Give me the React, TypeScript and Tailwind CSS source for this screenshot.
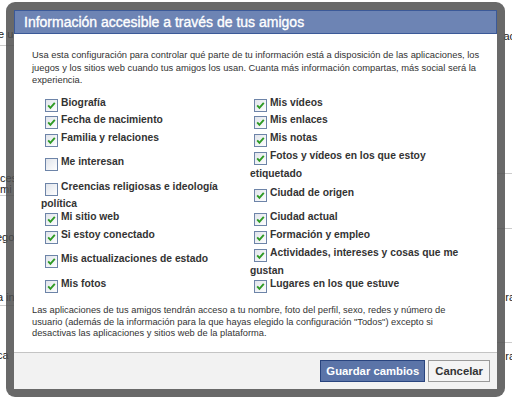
import React from 'react';

type Item = { label: string; more?: string; checked: boolean };

const rows: [Item, Item][] = [
  [{ label: 'Biografía', checked: true }, { label: 'Mis vídeos', checked: true }],
  [{ label: 'Fecha de nacimiento', checked: true }, { label: 'Mis enlaces', checked: true }],
  [{ label: 'Familia y relaciones', checked: true }, { label: 'Mis notas', checked: true }],
  [
    { label: 'Me interesan', checked: false },
    { label: 'Fotos y vídeos en los que estoy', more: 'etiquetado', checked: true },
  ],
  [
    { label: 'Creencias religiosas e ideología', more: 'política', checked: false },
    { label: 'Ciudad de origen', checked: true },
  ],
  [{ label: 'Mi sitio web', checked: true }, { label: 'Ciudad actual', checked: true }],
  [{ label: 'Si estoy conectado', checked: true }, { label: 'Formación y empleo', checked: true }],
  [
    { label: 'Mis actualizaciones de estado', checked: true },
    { label: 'Actividades, intereses y cosas que me', more: 'gustan', checked: true },
  ],
  [{ label: 'Mis fotos', checked: true }, { label: 'Lugares en los que estuve', checked: true }],
];

const CheckBox = ({ checked }: { checked: boolean }) => (
  <svg width="13" height="13" viewBox="0 0 13 13" className="shrink-0">
    <defs>
      <linearGradient id="cbg" x1="0" y1="0" x2="1" y2="1">
        <stop offset="0" stopColor="#dfe3ea" />
        <stop offset="1" stopColor="#ffffff" />
      </linearGradient>
    </defs>
    <rect x="0.5" y="0.5" width="12" height="12" fill="url(#cbg)" stroke="#6d84a8" />
    {checked && (
      <path d="M3.2 6.4 L5.4 8.8 L9.8 3.9" fill="none" stroke="#2e9a24" strokeWidth="1.9" />
    )}
  </svg>
);

const Cell = ({ item }: { item: Item }) => (
  <div className="flex flex-col">
    <div className="flex h-[17.75px] items-start">
      <div className="ml-[4px] mt-[3px]">
        <CheckBox checked={item.checked} />
      </div>
      <span className="ml-[3px] whitespace-nowrap text-[10.3px] font-bold leading-[14px] text-[#333]">
        {item.label}
      </span>
    </div>
    {item.more && (
      <div className="h-[13px] whitespace-nowrap text-[10.3px] font-bold leading-[13px] text-[#333]">
        {item.more}
      </div>
    )}
  </div>
);

const Frag = ({ children, className }: { children: React.ReactNode; className: string }) => (
  <span className={'whitespace-nowrap text-[11px] leading-[11px] text-[#222] ' + className}>{children}</span>
);

const Rule = ({ className }: { className: string }) => <div className={'h-px w-full bg-[#ccc] ' + className} />;

export default function App() {
  return (
    <div className="relative h-[401px] w-[512px] overflow-hidden bg-white font-['Liberation_Sans',Arial,sans-serif] text-[#333]">
      {/* page behind the dialog */}
      <div className="flex h-full justify-between">
        <div className="flex w-[16px] flex-col items-start">
          <Frag className="-ml-[2px] mt-[29px]">e u</Frag>
          <Rule className="mt-[5px]" />
          <Frag className="mt-[127px]">ces</Frag>
          <Frag className="">mi</Frag>
          <Rule className="" />
          <Frag className="-ml-[4px] mt-[36px]">ego</Frag>
          <Frag className="-ml-[3px] mt-[49px]">a in</Frag>
          <Rule className="mt-[2px]" />
          <Frag className="-ml-[3px] mt-[44px]">ca</Frag>
        </div>
        <div className="flex w-[15px] flex-col items-end">
          <Frag className="-mr-[3px] mt-[31px]">ac</Frag>
          <Rule className="mt-[131px]" />
          <Rule className="mt-[54px]" />
          <Frag className="-mr-[3px] mt-[63px]">ra</Frag>
          <Rule className="mt-[39px]" />
          <Frag className="-mr-[3px] mt-[8px]">ra</Frag>
        </div>
      </div>

      {/* dialog */}
      <div className="absolute left-[6px] top-[2px] h-[395px] w-[499px] rounded-[9px] bg-[#4f4f4f]/85 p-[8px]">
        <div className="flex h-full flex-col bg-white">
          <div className="flex h-[24px] items-center border border-[#3b5998] bg-[#6d84b4] pl-[9px]">
            <span className="text-[14px] leading-none text-white [-webkit-text-stroke:0.35px_white]">
              Información accesible a través de tus amigos
            </span>
          </div>

          <div className="flex flex-1 flex-col pl-[18px] pt-[15px]">
            <p className="whitespace-nowrap text-[9.35px] leading-[12.5px]">
              Usa esta configuración para controlar qué parte de tu información está a disposición de las aplicaciones, los
              <br />
              juegos y los sitios web cuando tus amigos los usan. Cuanta más información compartas, más social será la
              <br />
              experiencia.
            </p>

            <div className="ml-[9px] mt-[9px] grid grid-cols-[209px_209px] items-center">
              {rows.map(([a, b], i) => (
                <React.Fragment key={i}>
                  <Cell item={a} />
                  <Cell item={b} />
                </React.Fragment>
              ))}
            </div>

            <p className="mt-[11px] whitespace-nowrap text-[9.3px] leading-[11.5px]">
              Las aplicaciones de tus amigos tendrán acceso a tu nombre, foto del perfil, sexo, redes y número de
              <br />
              usuario (además de la información para la que hayas elegido la configuración "Todos") excepto si
              <br />
              desactivas las aplicaciones y sitios web de la plataforma.
            </p>
          </div>

          <div className="flex h-[37px] items-start justify-end gap-[3px] border-t border-[#c4c4c4] bg-[#f2f2f2] pr-[7px] pt-[7px]">
            <button className="h-[22px] border border-[#29447e] bg-[#5b74a8] px-[5px] text-[11.3px] font-bold text-white">
              Guardar cambios
            </button>
            <button className="h-[22px] border border-[#999] bg-[#f4f4f4] px-[6px] text-[11.3px] font-bold text-[#333]">
              Cancelar
            </button>
          </div>
        </div>
      </div>
    </div>
  );
}
